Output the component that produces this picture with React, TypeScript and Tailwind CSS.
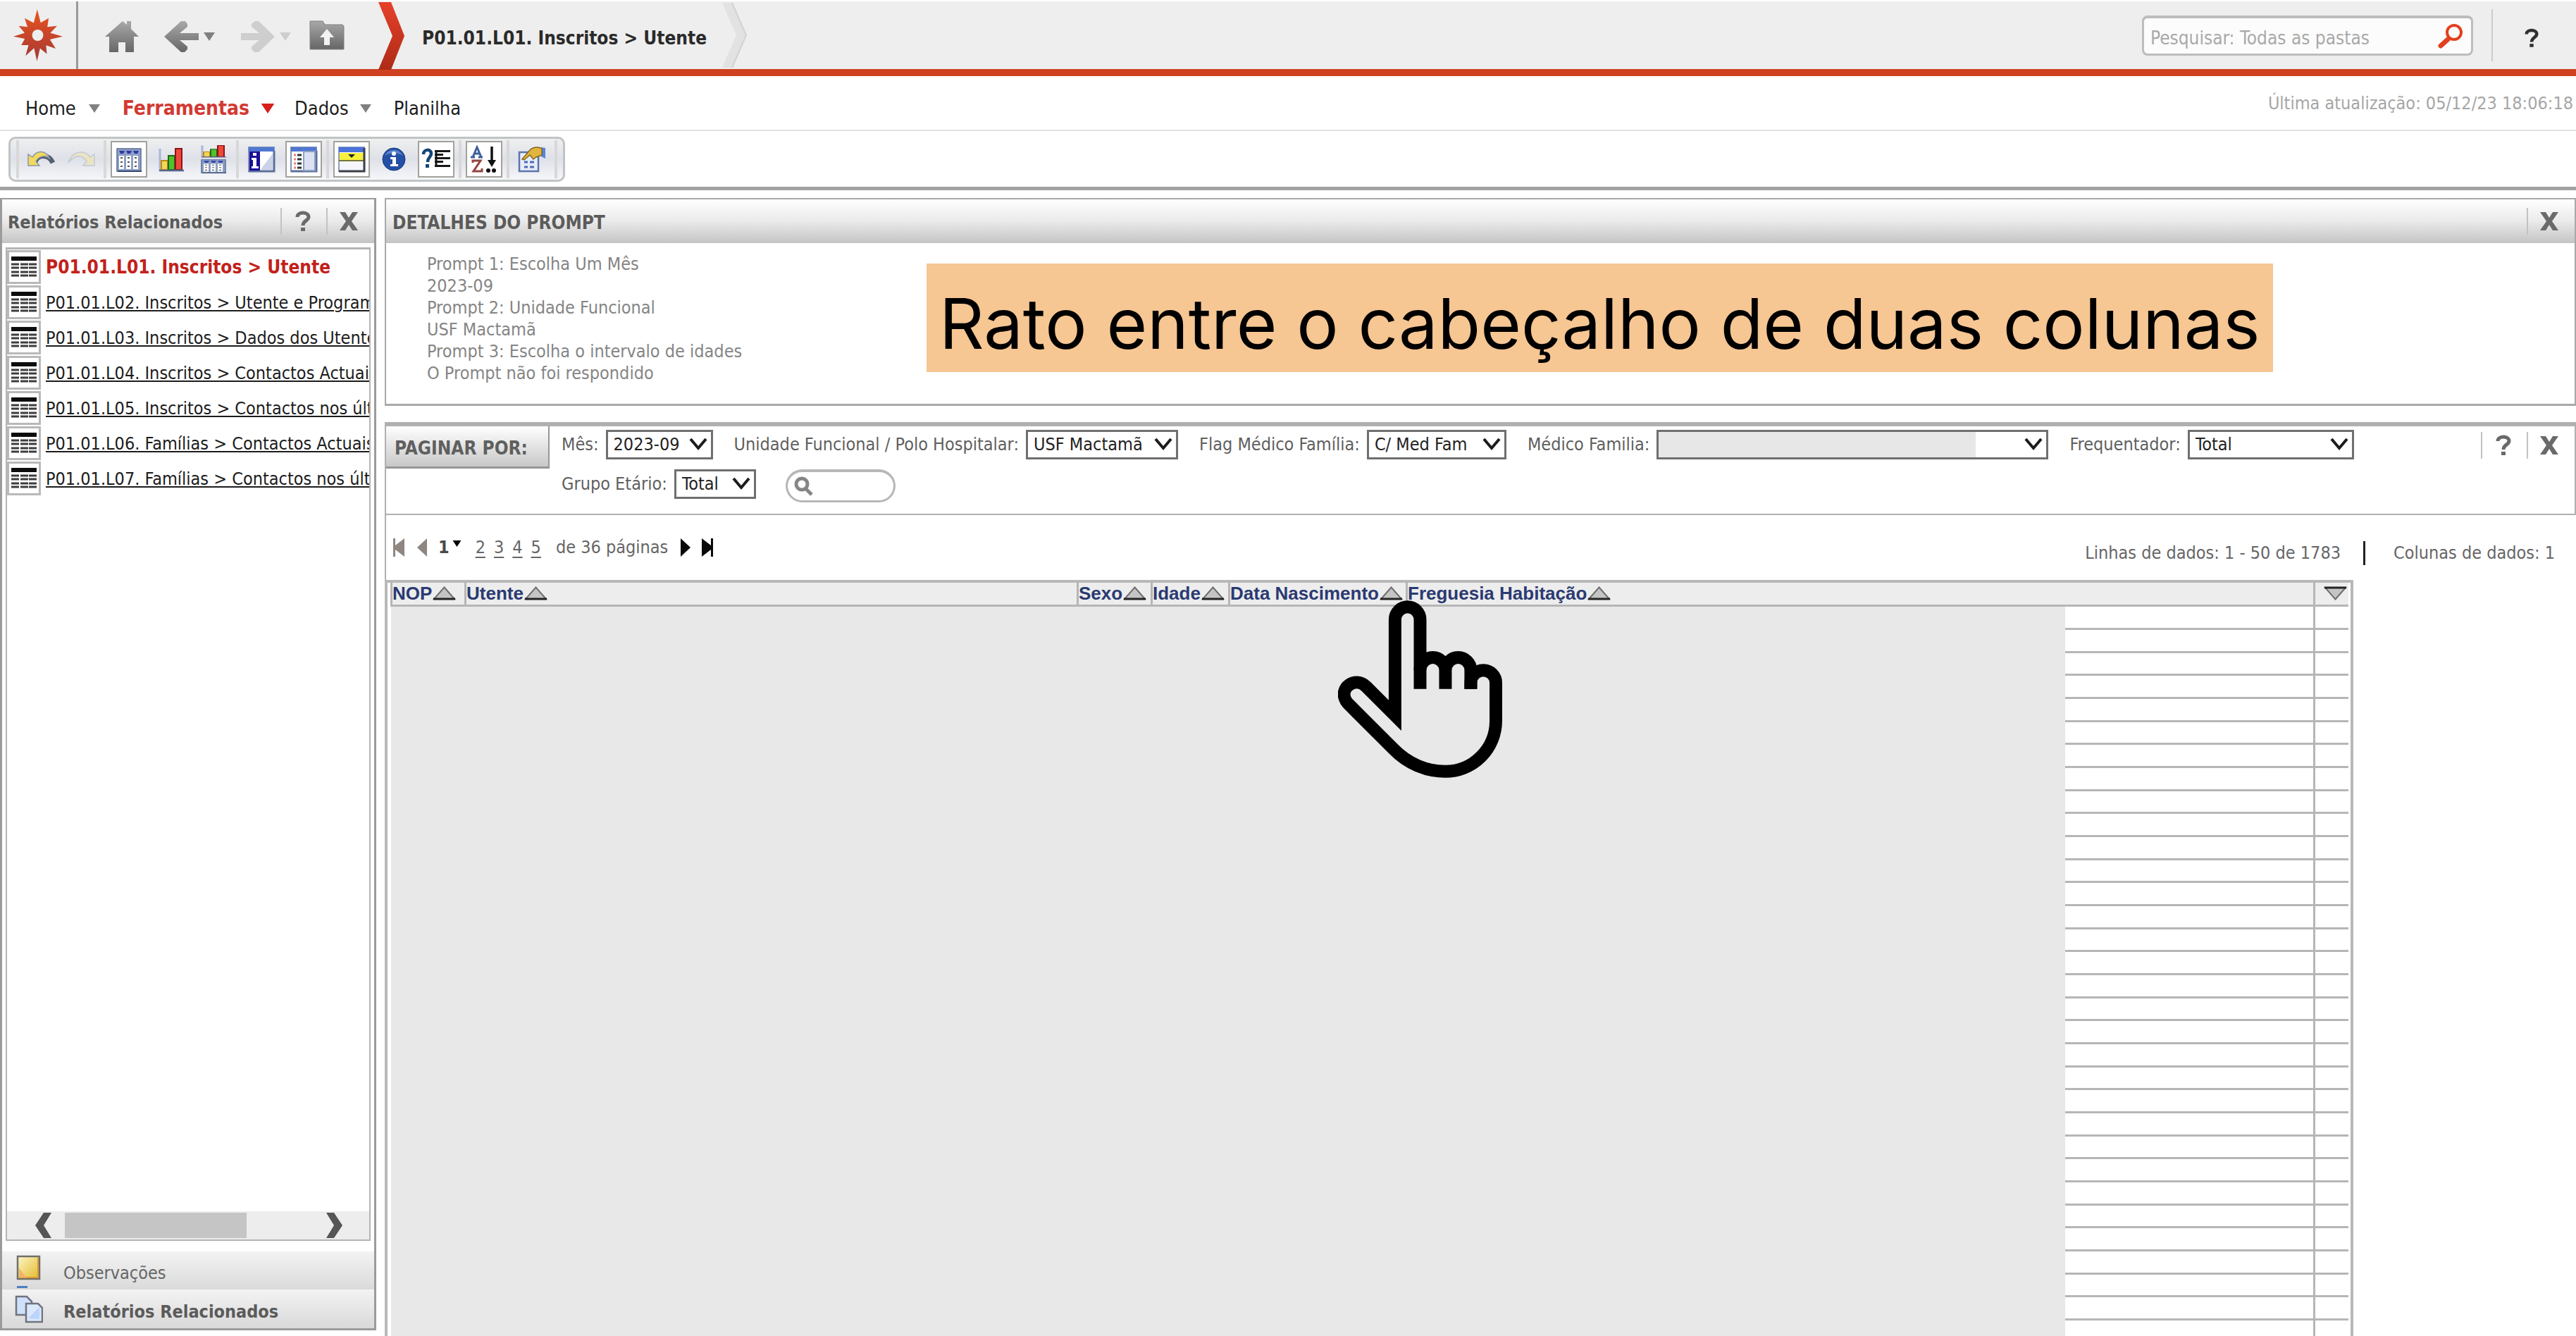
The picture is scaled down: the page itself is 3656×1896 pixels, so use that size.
import React from "react";

const REPORTS = [
  "P01.01.L02. Inscritos > Utente e Programas",
  "P01.01.L03. Inscritos > Dados dos Utentes",
  "P01.01.L04. Inscritos > Contactos Actuais",
  "P01.01.L05. Inscritos > Contactos nos últimos meses",
  "P01.01.L06. Famílias > Contactos Actuais",
  "P01.01.L07. Famílias > Contactos nos últimos meses",
];

const PROMPT_LINES = [
  "Prompt 1: Escolha Um Mês",
  "2023-09",
  "Prompt 2: Unidade Funcional",
  "USF Mactamã",
  "Prompt 3: Escolha o intervalo de idades",
  "O Prompt não foi respondido",
];

/* ---------- Top bar icons ---------- */

function StarLogo() {
  const tips = [
    [160, 38], [209, 76], [245, 109], [269, 154], [239, 206], [201, 229],
    [159, 260], [110, 237], [92, 191], [58, 154], [81, 109], [106, 76],
  ];
  const cx = 161;
  const cy = 150;
  const pts: string[] = [];
  tips.forEach(([x, y], i) => {
    const [nx, ny] = tips[(i + 1) % tips.length];
    const a = Math.atan2((y + ny) / 2 - cy, (x + nx) / 2 - cx);
    pts.push(`${x},${y}`, `${cx + Math.cos(a) * 56},${cy + Math.sin(a) * 56}`);
  });
  return (
    <svg className="h-[74px] w-[70px]" viewBox="58 38 211 222">
      <defs>
        <linearGradient id="star" x1="0" y1="0" x2="0" y2="1">
          <stop offset="0" stopColor="#e8551f" />
          <stop offset="0.5" stopColor="#c8452a" />
          <stop offset="1" stopColor="#a03a33" />
        </linearGradient>
      </defs>
      <polygon points={pts.join(" ")} fill="url(#star)" />
      <circle cx="162" cy="149" r="24" fill="#eeeeee" />
    </svg>
  );
}

function GrayGradient({ id }: { id: string }) {
  return (
    <defs>
      <linearGradient id={id} x1="0" y1="0" x2="0" y2="1">
        <stop offset="0" stopColor="#a8a8a8" />
        <stop offset="1" stopColor="#666666" />
      </linearGradient>
    </defs>
  );
}

function HomeIcon() {
  return (
    <svg className="h-[46px] w-12" viewBox="0 0 48 46">
      <GrayGradient id="gHome" />
      <path d="M25 1 L31 6 V1 H37 V12 L48 23 H41 V45 H29 V31 H19 V45 H6 V23 H0 Z" fill="url(#gHome)" />
    </svg>
  );
}

function BackIcon() {
  return (
    <svg className="h-[46px] w-[50px]" viewBox="0 0 50 46">
      <GrayGradient id="gBack" />
      <path d="M0 23 L24 1 H30 L33 5 V9 L22 18 H49 V28 H22 L33 37 V41 L29 45 H24 Z" fill="url(#gBack)" />
    </svg>
  );
}

function ForwardIcon() {
  return (
    <svg className="h-[46px] w-[50px]" viewBox="0 0 50 46">
      <path d="M49 23 L26 1 H21 L16 5 V9 L27 18 H1 V28 H27 L16 37 V41 L20 45 H26 Z" fill="#cecece" />
    </svg>
  );
}

function FolderUpIcon() {
  return (
    <svg className="h-[42px] w-[50px]" viewBox="0 0 50 42">
      <GrayGradient id="gFolder" />
      <path d="M1 1 H19 L22 6 H47 L49 8 V41 H1 Z" fill="url(#gFolder)" stroke="#808080" />
      <path d="M25 12 L35 24 H29 V35 H21 V24 H15 Z" fill="#f2f2f2" />
    </svg>
  );
}

function Caret({ className }: { className: string }) {
  return (
    <svg className={className} viewBox="0 0 16 12">
      <path d="M0 0 H16 L8 12 Z" fill="currentColor" />
    </svg>
  );
}

function Magnifier({ className }: { className: string }) {
  return (
    <svg className={className} viewBox="0 0 36 36" fill="none" stroke="currentColor" strokeLinecap="round">
      <circle cx="24" cy="13" r="10" strokeWidth="4" />
      <path d="M15 23 L5 32" strokeWidth="7" />
    </svg>
  );
}

/* ---------- Toolbar icons ---------- */

const ic = "h-10 w-10";

function UndoIcon() {
  return (
    <svg className={ic} viewBox="0 0 40 40">
      <path d="M11 24 C14 13 30 12 36 25" fill="none" stroke="#54606f" strokeWidth="7" />
      <path d="M1 13 V29 H17 L12 23 C17 14 27 14 32 20 C26 6 13 7 7 17 Z" fill="#f2d95c" stroke="#8a97ad" strokeWidth="1.5" />
    </svg>
  );
}

function RedoIcon() {
  return (
    <svg className={ic} viewBox="0 0 40 40">
      <path d="M39 13 V29 H23 L28 23 C22 14 12 12 2 25 C8 6 27 7 33 17 Z" fill="#ebe4c4" stroke="#c2c9d6" strokeWidth="1.5" />
    </svg>
  );
}

function GridGlyph() {
  return (
    <>
      <rect x="3" y="5" width="34" height="32" fill="#8d9fc4" stroke="#5c6f99" strokeWidth="1.5" />
      <rect x="4" y="36" width="34" height="2" fill="#34486e" />
      {[6, 16, 26].map((x) => (
        <g key={x}>
          <path d={`M${x} 8 h8 l-2 4 h-4 z`} fill="#2c38a8" />
          <rect x={x} y="15" width="7" height="19" fill="#fff" />
          <path d={`M${x + 2} 18 h3 M${x + 2} 24 h3 M${x + 2} 30 h3`} stroke="#555" strokeWidth="2" />
        </g>
      ))}
    </>
  );
}

function GridIcon() {
  return <svg className={ic} viewBox="0 0 40 40"><GridGlyph /></svg>;
}

function BarsGlyph() {
  return (
    <>
      <path d="M4 5 V37" stroke="#a9b6d6" strokeWidth="3" />
      <rect x="6" y="22" width="9" height="13" fill="#f3d55a" stroke="#c08a10" strokeWidth="2" />
      <rect x="16" y="15" width="9" height="20" fill="#4fc32e" stroke="#1f6a12" strokeWidth="2" />
      <rect x="26" y="5" width="9" height="30" fill="#f0473c" stroke="#8e1414" strokeWidth="2" />
      <path d="M3 36 H38" stroke="#56688e" strokeWidth="2.5" />
    </>
  );
}

function BarsIcon() {
  return <svg className={ic} viewBox="0 0 40 40"><BarsGlyph /></svg>;
}

function BarsGridIcon() {
  return (
    <svg className={ic} viewBox="0 0 40 40">
      <svg x="2" y="0" width="37" height="18" viewBox="2 4 37 34" preserveAspectRatio="none"><BarsGlyph /></svg>
      <svg x="2" y="20" width="37" height="20" viewBox="2 4 37 34" preserveAspectRatio="none"><GridGlyph /></svg>
    </svg>
  );
}

function WindowFrame() {
  return (
    <>
      <rect x="2" y="3" width="36" height="34" fill="#fff" stroke="#7f93bd" strokeWidth="2" />
      <rect x="2" y="3" width="36" height="6" fill="#4f77cf" />
      <path d="M38 8 V37 H2" fill="none" stroke="#5c6f99" strokeWidth="3" />
    </>
  );
}

function InfoPanelIcon() {
  return (
    <svg className={ic} viewBox="0 0 40 40">
      <WindowFrame />
      <path d="M20 33 L36 12 V35 H20 Z" fill="#cbd3e8" />
      <rect x="3" y="9" width="15" height="27" fill="#1a0f98" />
      <path d="M6 18 H13 V30 H16 V33 H6 V30 H8 V21 H6 Z" fill="#fff" />
      <rect x="8" y="11" width="5" height="4" fill="#fff" />
    </svg>
  );
}

function OutlinePanelIcon() {
  return (
    <svg className={ic} viewBox="0 0 40 40">
      <WindowFrame />
      <rect x="20" y="9" width="16" height="27" fill="#dbe1f0" stroke="#8ea0c8" strokeWidth="2" />
      <path d="M6 14 H9 M6 20 H9 M6 26 H9 M6 32 H9" stroke="#e8807a" strokeWidth="3" />
      <path d="M11 14 H17 M11 20 H17 M11 26 H17 M11 32 H17" stroke="#333" strokeWidth="3" />
    </svg>
  );
}

function PageByIcon() {
  return (
    <svg className={ic} viewBox="0 0 40 40">
      <rect x="2" y="3" width="36" height="34" fill="#f4f6fb" stroke="#8f9fc0" strokeWidth="2" />
      <rect x="2" y="3" width="36" height="7" fill="#4a72da" />
      <rect x="3" y="11" width="35" height="10" fill="#f7ef3a" />
      <path d="M15 13 H25 L20 18 Z" fill="#222" />
      <path d="M2 22 H38" stroke="#77733a" strokeWidth="2" />
      <path d="M38 4 V37 H2" fill="none" stroke="#3a3f4a" strokeWidth="3" />
    </svg>
  );
}

function InfoIcon() {
  return (
    <svg className={ic} viewBox="0 0 40 40">
      <circle cx="20" cy="20" r="16" fill="#2350a4" stroke="#17397e" strokeWidth="1" />
      <path d="M7 15 C12 4 28 4 33 15 C26 10 14 10 7 15 Z" fill="#5c83cc" />
      <circle cx="20" cy="12" r="3" fill="#fff" />
      <path d="M15 17 H23 V27 H26 V30 H15 V27 H18 V20 H15 Z" fill="#fff" />
    </svg>
  );
}

function PromptDetailsIcon() {
  return (
    <svg className="h-10 w-11" viewBox="0 0 44 40">
      <path d="M4 13 C4 5 15 5 15 12 C15 17 10 17 10 24" fill="none" stroke="#154578" strokeWidth="4.5" />
      <rect x="7" y="27" width="5" height="5" fill="#154578" />
      <path d="M20 8.5 H42 M20 13.5 H32 M20 18.5 H42 M20 23.5 H32 M20 29.5 H42" stroke="#161616" strokeWidth="3" />
      <path d="M22 7 V31" stroke="#161616" strokeWidth="3" />
    </svg>
  );
}

function SortIcon() {
  return (
    <svg className={ic} viewBox="0 0 40 40" fill="none">
      <path d="M4 17 L10 3 L16 17 M6 12 H14 M1 17 H7 M12 17 H18" stroke="#3e619f" strokeWidth="3" />
      <path d="M4 25 V22 H15 L5 37 H17 V33" stroke="#93463f" strokeWidth="3" />
      <path d="M31 2 V24" stroke="#111" strokeWidth="3.5" />
      <path d="M25 21 H37 L31 31 Z" fill="#111" />
      <circle cx="26" cy="36" r="3" fill="#111" />
      <circle cx="34" cy="36" r="3" fill="#111" />
    </svg>
  );
}

function PropertiesIcon() {
  return (
    <svg className={ic} viewBox="0 0 40 40">
      <rect x="2" y="10" width="27" height="27" fill="#e6ecf9" stroke="#5d74ae" strokeWidth="2.5" />
      <path d="M9 24 H14 M17 24 H23 M9 31 H14 M17 31 H23" stroke="#4f6bb5" strokeWidth="3" />
      <path d="M33 3 L39 4 V19 L33 16 Z" fill="#5a82e0" />
      <path d="M6 20 L17 7 C22 2 30 2 34 5 V14 L26 17 L22 20 L17 14 L9 21 Z" fill="#e2b53f" stroke="#84671f" strokeWidth="1.5" />
    </svg>
  );
}

function ToolButton({ label, boxed, children }: { label: string; boxed?: boolean; children: React.ReactNode }) {
  return (
    <button
      aria-label={label}
      className={
        boxed
          ? "flex h-[52px] w-[52px] items-center justify-center border-2 border-[#a3a19b] bg-white"
          : "flex h-[52px] w-[52px] items-center justify-center"
      }
    >
      {children}
    </button>
  );
}

function ToolSeparator() {
  return <div className="mx-[6px] h-[54px] w-1 bg-[#d8d8d8]" />;
}

/* ---------- Panels ---------- */

function QuestionGlyph({ className }: { className: string }) {
  return (
    <svg className={className} viewBox="0 0 22 30" fill="none">
      <path d="M3 9 C3 1 19 1 19 9 C19 14 11 14 11 21" stroke="currentColor" strokeWidth="5" />
      <rect x="8" y="24" width="6" height="5" fill="currentColor" />
    </svg>
  );
}

function CloseGlyph() {
  return (
    <svg className="h-[26px] w-[26px] text-[#6a6a6a]" viewBox="0 0 26 26">
      <path d="M0 0 H8 L13 8 L18 0 H26 L17 13 L26 26 H18 L13 18 L8 26 H0 L9 13 Z" fill="currentColor" />
    </svg>
  );
}

function PanelActions({ help }: { help?: boolean }) {
  return (
    <div className="flex items-center">
      {help && (
        <button aria-label="Ajuda" className="flex h-[38px] w-[65px] items-center justify-center border-l-2 border-[#c2c2c2] pr-1">
          <QuestionGlyph className="h-[30px] w-[22px] text-[#6a6a6a]" />
        </button>
      )}
      <button aria-label="Fechar" className="flex h-[38px] w-[68px] items-center justify-center border-l-2 border-[#c2c2c2] pr-1.5">
        <CloseGlyph />
      </button>
    </div>
  );
}

function ReportIcon() {
  return (
    <span className="flex h-12 w-12 shrink-0 items-center justify-center border-[3px] border-[#b9b9b9] bg-white">
      <svg className="h-[30px] w-9" viewBox="0 0 36 30">
        <rect x="0" y="0" width="36" height="6" fill="#0c0c0c" />
        {[0, 13, 25].map((x) => (
          <path key={x} d={`M${x} 11 h11 M${x} 16 h11 M${x} 22 h11 M${x} 27 h11`} stroke="#3d3d3d" strokeWidth="3" />
        ))}
      </svg>
    </span>
  );
}

function Chevron() {
  return (
    <svg className="pointer-events-none absolute right-2 top-3 h-[18px] w-[26px]" viewBox="0 0 26 18">
      <path d="M2 1 L13 14 L24 1" fill="none" stroke="#1c1c1c" strokeWidth="4" />
    </svg>
  );
}

function Field({ id, label, value, width }: { id: string; label: string; value: string; width: string }) {
  return (
    <div className="flex h-[42px] items-center gap-2.5">
      <label htmlFor={id} className="whitespace-nowrap text-[#5f5f5f]">{label}</label>
      <div className="relative">
        <select
          id={id}
          defaultValue={value}
          className={`${width} block h-[42px] appearance-none border-[3px] border-[#6f6f6f] bg-white pl-2 text-[#222]`}
        >
          <option>{value}</option>
        </select>
        <Chevron />
      </div>
    </div>
  );
}

function SortTriangle() {
  return (
    <svg className="h-5 w-[33px] shrink-0" viewBox="0 0 33 20">
      <path d="M16.5 1.5 L31 18 H2 Z" fill="#c4c4c4" stroke="#6e6e6e" strokeWidth="2" />
      <path d="M1 18 H32" stroke="#222" strokeWidth="3" />
    </svg>
  );
}

const COLUMNS: [string, string][] = [
  ["NOP", "w-[105px]"],
  ["Utente", "w-[869px]"],
  ["Sexo", "w-[105px]"],
  ["Idade", "w-[110px]"],
  ["Data Nascimento", "w-[252px]"],
  ["Freguesia Habitação", ""],
];

function HandPointer() {
  return (
    <svg
      className="absolute left-[1353px] top-[29px] h-[252px] w-[233px]"
      viewBox="148 126 700 756"
      fill="none"
      stroke="#000"
      strokeWidth="54"
    >
      <path d="M498 503 V207 A53.5 53.5 0 0 0 391 207 V616 L268 493 C222 448 150 498 182 554 Q186 561 192 567 L385 760 C445 822 525 855 605 855 A216 216 0 0 0 821 640 V477 A53.5 53.5 0 0 0 714 477 V503" />
      <path d="M498 423 A54 54 0 0 1 606 423 V503 V423 A54 54 0 0 1 714 423 V503" />
    </svg>
  );
}

function TopBar() {
  return (
    <header className="flex h-[108px] items-stretch border-b-[10px] border-t-2 border-b-[#cf4120] border-t-white bg-[#eeeeee]">
      <button aria-label="MicroStrategy" className="flex w-[111px] items-center justify-center border-r-[3px] border-[#999]">
        <StarLogo />
      </button>
      <nav aria-label="Navegação" className="flex items-center">
        <button aria-label="Início" className="ml-[38px] pt-1"><HomeIcon /></button>
        <button aria-label="Voltar" className="ml-9 flex items-center gap-[6px] pt-1 text-[#808080]">
          <BackIcon /><Caret className="h-3 w-4" />
        </button>
        <button aria-label="Avançar" className="ml-9 flex items-center gap-[6px] pt-1 text-[#cecece]">
          <ForwardIcon /><Caret className="h-3 w-4" />
        </button>
        <button aria-label="Pasta acima" className="ml-[26px]"><FolderUpIcon /></button>
      </nav>
      <svg className="ml-12 h-[98px] w-10 shrink-0 overflow-visible" viewBox="0 0 40 98">
        <defs>
          <linearGradient id="crumb" x1="0" y1="0" x2="0" y2="1">
            <stop offset="0" stopColor="#e6402a" />
            <stop offset="1" stopColor="#ad2c17" />
          </linearGradient>
        </defs>
        <path d="M0 1 H18 L37 49 L18 97 H0 L20 49 Z" fill="url(#crumb)" />
      </svg>
      <h1 className="flex items-center pl-[22px] pt-2 text-[26px] font-bold text-[#2a2a2a]">P01.01.L01. Inscritos &gt; Utente</h1>
      <svg className="ml-5 h-[96px] w-10 shrink-0" viewBox="0 0 40 96">
        <path d="M2 2 H16 L36 48 L16 94 H2 L22 48 Z" fill="#e2e2e2" />
        <path d="M16 2 L36 48 L16 94" fill="none" stroke="#d2d2d2" strokeWidth="2" />
      </svg>
      <div className="ml-auto flex items-center">
        <label className="flex h-[57px] w-[470px] items-center rounded-lg border-[3px] border-t-4 border-[#bdbdbd] bg-[#fcfcfc] pl-[9px] pr-3">
          <input
            aria-label="Pesquisar"
            placeholder="Pesquisar: Todas as pastas"
            className="min-w-0 flex-1 bg-transparent pt-1.5 text-[26px] outline-none placeholder:text-[#a9a9a9]"
          />
          <Magnifier className="h-9 w-9 text-[#e2401f]" />
        </label>
        <div className="ml-[26px] h-[74px] w-0.5 bg-[#cccccc]" />
        <button aria-label="Ajuda" className="flex w-[118px] justify-center pr-2 pt-2">
          <QuestionGlyph className="h-[28px] w-[20px] text-[#2f2f2f]" />
        </button>
      </div>
    </header>
  );
}

function MenuBar() {
  return (
    <div className="flex h-[78px] items-center border-b-2 border-[#e2e2e2] pl-9 text-[27px] text-[#1d1d1d]">
      <nav aria-label="Menu" className="flex items-center pt-4">
        <button className="flex items-center gap-[18px]">Home <Caret className="h-3 w-4 text-[#808080]" /></button>
        <button className="ml-8 flex items-center gap-4 text-[28px] font-bold text-[#d23a32]">
          Ferramentas <Caret className="h-3.5 w-5 text-[#d7201c]" />
        </button>
        <button className="ml-7 flex items-center gap-4">Dados <Caret className="h-3 w-4 text-[#808080]" /></button>
        <button className="ml-8">Planilha</button>
      </nav>
      <p className="ml-auto pr-1 pt-0.5 text-[25px] text-[#a6a6a6]">Última atualização: 05/12/23 18:06:18</p>
    </div>
  );
}

function Toolbar() {
  return (
    <div className="flex h-[84px] items-center border-b-[5px] border-[#a2a2a2] px-3">
      <div
        role="toolbar"
        aria-label="Ferramentas"
        className="flex h-16 items-center rounded-[10px] border-[3px] border-[#c1c4c4] bg-linear-to-b from-[#eeefef] via-[#dfe1e9] to-[#f6f7f9] pl-0.5 pr-0.5"
      >
        <ToolSeparator />
        <div className="flex gap-1">
          <ToolButton label="Desfazer"><UndoIcon /></ToolButton>
          <ToolButton label="Refazer"><RedoIcon /></ToolButton>
        </div>
        <ToolSeparator />
        <div className="flex gap-2">
          <ToolButton label="Grade" boxed><GridIcon /></ToolButton>
          <ToolButton label="Gráfico"><BarsIcon /></ToolButton>
          <ToolButton label="Grade e gráfico"><BarsGridIcon /></ToolButton>
        </div>
        <ToolSeparator />
        <div className="flex gap-2">
          <ToolButton label="Objetos do relatório"><InfoPanelIcon /></ToolButton>
          <ToolButton label="Relatórios relacionados" boxed><OutlinePanelIcon /></ToolButton>
        </div>
        <ToolSeparator />
        <div className="flex gap-2">
          <ToolButton label="Paginar por" boxed><PageByIcon /></ToolButton>
          <ToolButton label="Detalhes do relatório"><InfoIcon /></ToolButton>
          <ToolButton label="Detalhes do prompt" boxed><PromptDetailsIcon /></ToolButton>
        </div>
        <ToolSeparator />
        <ToolButton label="Botões de ordenação" boxed><SortIcon /></ToolButton>
        <ToolSeparator />
        <ToolButton label="Propriedades"><PropertiesIcon /></ToolButton>
        <ToolSeparator />
      </div>
    </div>
  );
}

function Sidebar() {
  return (
    <aside className="flex w-[534px] shrink-0 flex-col border-[3px] border-t-2 border-[#9b9b9b]">
      <div className="flex h-[62px] shrink-0 items-center justify-between bg-linear-to-b from-white via-[#eaeaea] to-[#c4c4c4] pl-2">
        <h2 className="pt-1 text-[25px] font-bold text-[#5b5b5b]">Relatórios Relacionados</h2>
        <PanelActions help />
      </div>
      <div className="mx-[5px] mb-[15px] mt-1.5 flex min-h-0 flex-1 flex-col overflow-hidden border-2 border-t-[3px] border-[#b4b4b4]">
        <ul className="flex flex-1 flex-col gap-[2px] pt-px">
          <li className="flex items-center gap-[7px]">
            <ReportIcon />
            <a href="#l01" className="whitespace-nowrap text-[26px] font-bold text-[#c2211b]">P01.01.L01. Inscritos &gt; Utente</a>
          </li>
          {REPORTS.map((r) => (
            <li key={r} className="flex items-center gap-[7px]">
              <ReportIcon />
              <a href="#relatorio" className="whitespace-nowrap pt-0.5 text-[#1c1c1c] underline decoration-2 underline-offset-2">{r}</a>
            </li>
          ))}
        </ul>
        <div className="flex h-10 shrink-0 items-center bg-[#ededed] text-[#555]">
          <button aria-label="Rolar para a esquerda" className="flex w-[82px] justify-end pr-[18px]">
            <svg className="h-9 w-6" viewBox="0 0 24 36"><path d="M12 0 H23 L12 18 L23 36 H12 L0 18 Z" fill="currentColor" /></svg>
          </button>
          <div className="h-9 w-[258px] bg-[#c5c5c5]" />
          <button aria-label="Rolar para a direita" className="ml-auto mr-[38px]">
            <svg className="h-9 w-6" viewBox="0 0 24 36"><path d="M12 0 H1 L12 18 L1 36 H12 L24 18 Z" fill="currentColor" /></svg>
          </button>
        </div>
      </div>
      <button className="flex h-[54px] shrink-0 items-center bg-linear-to-b from-[#f3f3f3] to-[#dadada] pl-5 text-[#666]">
        <svg className="h-[50px] w-9" viewBox="0 0 36 50">
          <defs>
            <linearGradient id="note" x1="0" y1="0" x2="1" y2="1">
              <stop offset="0" stopColor="#fdf6c8" />
              <stop offset="1" stopColor="#e3b92a" />
            </linearGradient>
          </defs>
          <rect x="2" y="5" width="31" height="32" fill="url(#note)" stroke="#70706c" strokeWidth="2.5" />
          <path d="M31 7 V35 H4" fill="none" stroke="#dd9a35" strokeWidth="2" />
          <path d="M4 22 L15 35 H4 Z" fill="#f0b469" />
          <path d="M1 48.5 H16" stroke="#4a80bd" strokeWidth="3" />
        </svg>
        <span className="pl-[31px] pt-2">Observações</span>
      </button>
      <button className="flex h-[55px] shrink-0 items-center bg-linear-to-b from-[#f3f3f3] to-[#d9d9d9] pl-[18px] font-bold text-[#5b5b5b]">
        <svg className="h-10 w-10" viewBox="0 0 40 40" stroke="#6f7480" strokeWidth="2.5">
          <path d="M2 2 H17 L24 9 V28 H2 Z" fill="#cfe0fb" />
          <path d="M16 12 H33 L39 18 V38 H16 Z" fill="#dce8fc" />
          <path d="M19 33 L35 17 V34 Z" fill="#bcd4fa" stroke="none" />
        </svg>
        <span className="pl-[29px] pt-2">Relatórios Relacionados</span>
      </button>
    </aside>
  );
}

function PromptDetails() {
  return (
    <section className="relative">
      <div className="border-2 border-b-[3px] border-[#a9a9a9]">
        <div className="flex h-[62px] items-center justify-between bg-linear-to-b from-white via-[#eaeaea] to-[#c4c4c4] pl-[9px]">
          <h2 className="pt-1 text-[26px] font-bold text-[#5b5b5b]">DETALHES DO PROMPT</h2>
          <PanelActions />
        </div>
        <div className="h-[228px] pl-[58px] pt-[14px] leading-[31px] text-[#858585]">
          {PROMPT_LINES.map((line) => (
            <p key={line}>{line}</p>
          ))}
        </div>
      </div>
      <p className="absolute left-[769px] top-[93px] flex h-[154px] items-center whitespace-nowrap bg-[#f6c693] px-[18px] pt-4 font-['Inter',sans-serif] text-[99px] text-black">
        Rato entre o cabeçalho de duas colunas
      </p>
    </section>
  );
}

function PageBy() {
  return (
    <section className="mt-[23px] flex h-[132px] items-start border-2 border-t-[6px] border-[#b0b0b0]">
      <h2 className="flex h-[60px] w-[232px] shrink-0 items-center border-b-[3px] border-r-2 border-[#979797] bg-linear-to-b from-white to-[#c8c8c8] pl-3 pt-1 text-[26px] font-bold text-[#5f5f5f]">
        PAGINAR POR:
      </h2>
      <div className="flex flex-1 flex-wrap items-start gap-x-[30px] gap-y-3.5 pl-[17px] pt-[5px]">
        <Field id="mes" label="Mês:" value="2023-09" width="w-[152px]" />
        <Field id="unidade" label="Unidade Funcional / Polo Hospitalar:" value="USF Mactamã" width="w-[216px]" />
        <Field id="flag" label="Flag Médico Família:" value="C/ Med Fam" width="w-[198px]" />
        <div className="flex h-[42px] items-center gap-2.5">
          <label htmlFor="medico" className="whitespace-nowrap text-[#5f5f5f]">Médico Familia:</label>
          <div className="relative">
            <select id="medico" className="block h-[42px] w-[556px] appearance-none border-[3px] border-[#6f6f6f] bg-white">
              <option></option>
            </select>
            <div className="absolute bottom-[3px] left-[3px] right-[103px] top-[3px] bg-[#e7e7e7]" />
            <Chevron />
          </div>
        </div>
        <Field id="frequentador" label="Frequentador:" value="Total" width="w-[236px]" />
        <div className="basis-full" hidden />
        <Field id="grupo" label="Grupo Etário:" value="Total" width="w-[116px]" />
        <label className="ml-3 flex h-[47px] w-[156px] items-center rounded-full border-[3px] border-t-4 border-[#b7b7b7] pl-2">
          <svg className="h-7 w-7 shrink-0 text-[#858585]" viewBox="0 0 28 28" fill="none" stroke="currentColor">
            <circle cx="12" cy="11" r="8" strokeWidth="5" />
            <path d="M17 17 L26 26" strokeWidth="5" />
          </svg>
          <input aria-label="Pesquisar atributo" className="w-20 bg-transparent outline-none" />
        </label>
      </div>
      <div className="pt-2"><PanelActions help /></div>
    </section>
  );
}

function Pager() {
  return (
    <div className="flex h-[92px] items-center border-l-2 border-[#b0b0b0] pl-2.5 pr-[30px] text-[#666]">
      <nav aria-label="Paginação" className="flex items-center">
        <button aria-label="Primeira página">
          <svg className="h-[26px] w-4" viewBox="0 0 16 26"><path d="M0 0 H3 V10 L16 0 V26 L3 16 V26 H0 Z" fill="#8e8680" /></svg>
        </button>
        <button aria-label="Página anterior" className="ml-[18px]">
          <svg className="h-[26px] w-3.5" viewBox="0 0 14 26"><path d="M14 0 V26 L0 13 Z" fill="#8e8680" /></svg>
        </button>
        <button aria-label="Página 1" className="ml-4 flex items-center gap-1 font-bold text-[#4a4a4a]">
          1<Caret className="mb-3 h-[9px] w-[13px] text-black" />
        </button>
        <div className="ml-5 flex gap-3">
          {["2", "3", "4", "5"].map((n) => (
            <a key={n} href={`#pagina${n}`} className="underline decoration-2 underline-offset-[5px]">{n}</a>
          ))}
        </div>
        <span className="ml-[21px]">de 36 páginas</span>
        <button aria-label="Próxima página" className="ml-[18px]">
          <svg className="h-[26px] w-3.5" viewBox="0 0 14 26"><path d="M0 0 V26 L14 13 Z" fill="#0a0a0a" /></svg>
        </button>
        <button aria-label="Última página" className="ml-4">
          <svg className="h-[26px] w-4" viewBox="0 0 16 26"><path d="M16 0 H13 V10 L0 0 V26 L13 16 V26 H16 Z" fill="#0a0a0a" /></svg>
        </button>
      </nav>
      <div className="ml-auto flex items-center pt-4">
        <span>Linhas de dados: 1 - 50 de 1783</span>
        <div className="mx-8 h-[34px] w-[3px] bg-[#222]" />
        <span className="pl-2">Colunas de dados: 1</span>
      </div>
    </div>
  );
}

function ReportTable() {
  return (
    <section className="relative mr-[316px] min-h-0 flex-1 overflow-hidden border-x-[4px] border-t-[4px] border-[#b8b8b8] pl-[4px] pr-[3px]">
      <table className="w-full table-fixed border-collapse">
        <thead className="font-['Liberation_Sans',Arial,sans-serif] text-[26px] leading-[30px] text-[#2b3a72]">
          <tr className="h-[32px] border-b-[3px] border-[#b6b6b6] bg-[#ededed]">
            {COLUMNS.map(([name, width]) => (
              <th key={name} className={`${width} border-l-[3px] border-[#b6b6b6] p-0 text-left`}>
                <div className="flex items-center gap-px whitespace-nowrap">
                  {name}
                  <SortTriangle />
                </div>
              </th>
            ))}
            <th className="w-[49px] border-l-[3px] border-[#b6b6b6] p-0">
              <svg className="ml-3 h-5 w-[33px]" viewBox="0 0 33 20" role="img" aria-label="Métricas">
                <path d="M16.5 18.5 L31 2 H2 Z" fill="#c4c4c4" stroke="#6e6e6e" strokeWidth="2" />
                <path d="M1 2 H32" stroke="#222" strokeWidth="3" />
              </svg>
            </th>
          </tr>
        </thead>
        <tbody>
          {Array.from({ length: 34 }, (_, i) => (
            <tr key={i} className="h-[33px] border-b-[3px] border-[#b6b6b6] nth-[3n]:h-[32px]">
              <td colSpan={6} className="p-0" />
              <td className="border-l-[3px] border-[#b6b6b6] p-0" />
            </tr>
          ))}
        </tbody>
      </table>
      <div className="absolute bottom-0 left-[5px] right-[405px] top-[34px] bg-[#e8e8e8]" />
    </section>
  );
}

export default function App() {
  return (
    <div className="flex h-screen flex-col overflow-hidden bg-white font-['DejaVu_Sans_Condensed','DejaVu_Sans',sans-serif] text-[25px] leading-[30px]">
      <TopBar />
      <MenuBar />
      <Toolbar />
      <div className="flex min-h-0 flex-1 gap-3 pt-[11px]">
        <div className="flex shrink-0 pb-2"><Sidebar /></div>
        <main className="flex min-w-0 flex-1 flex-col">
          <PromptDetails />
          <PageBy />
          <Pager />
          <div className="relative flex min-h-0 flex-1 flex-col">
            <ReportTable />
            <HandPointer />
          </div>
        </main>
      </div>
    </div>
  );
}
